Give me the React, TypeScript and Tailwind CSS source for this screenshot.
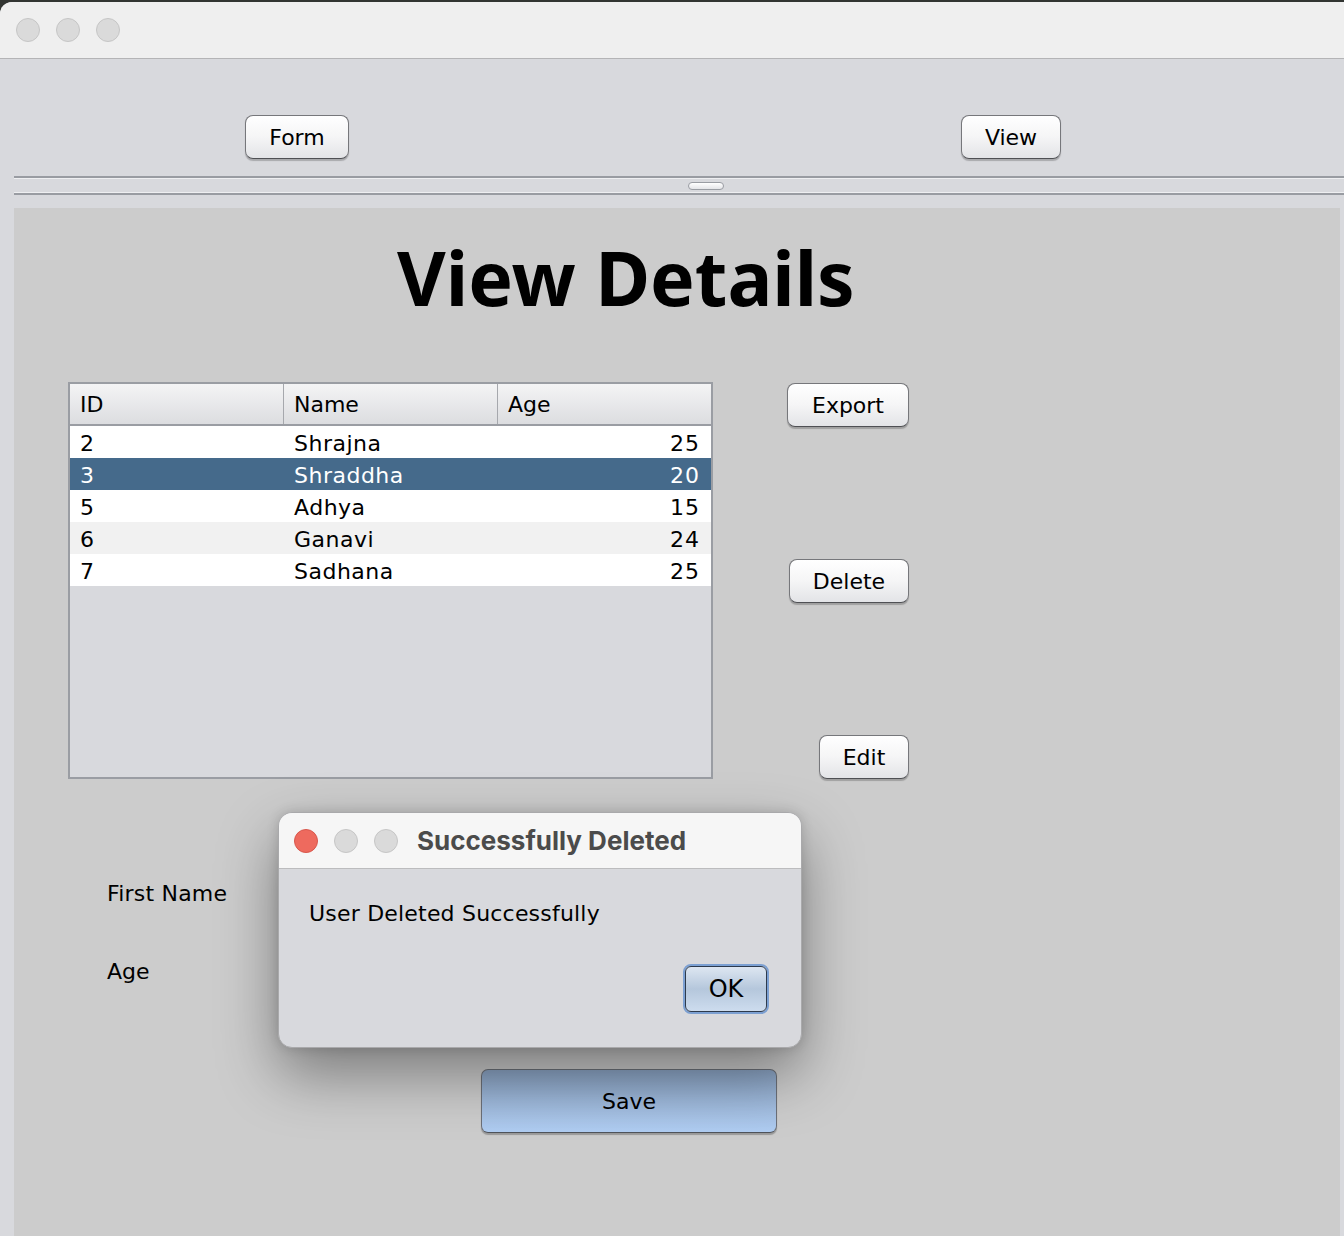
import clsx from "clsx"

type Row = {
  id: string
  name: string
  age: string
}

const rows: Row[] = [
  { id: "2", name: "Shrajna", age: "25" },
  { id: "3", name: "Shraddha", age: "20" },
  { id: "5", name: "Adhya", age: "15" },
  { id: "6", name: "Ganavi", age: "24" },
  { id: "7", name: "Sadhana", age: "25" },
]

const AquaButton = ({ label, className }: { label: string; className?: string }) => (
  <button
    className={clsx(
      "h-[44px] rounded-[8px] border-[1.5px] border-[#76777b] border-b-[#4f5054] bg-linear-to-b from-[#ffffff] via-[#f5f5f6] to-[#e3e4e7] pt-[2px] text-[22px] leading-none text-black shadow-[0_1.5px_1px_rgba(0,0,0,0.22)]",
      className
    )}
  >
    {label}
  </button>
)

const Light = ({ color }: { color: "red" | "gray" }) => (
  <div
    className={clsx(
      "h-[24px] w-[24px] rounded-full border",
      color === "red" ? "border-[#d8574c] bg-[#ee6a5e]" : "border-[#c6c6c6] bg-[#dadada]"
    )}
  />
)

const App = () => {
  return (
    <div className="relative h-[1236px] w-[1344px] overflow-hidden bg-[#323532] font-['DejaVu_Sans',sans-serif] text-black">
      <div className="mt-[2px] flex h-[1234px] flex-col overflow-hidden rounded-tl-[12px] bg-[#d8d9dd]">
        {/* title bar */}
        <div className="flex h-[57px] shrink-0 items-center gap-[16px] border-b border-[#b4b4b6] bg-[#efefef] pl-[16px] pb-[1px]">
          <Light color="gray" />
          <Light color="gray" />
          <Light color="gray" />
        </div>

        {/* top panel */}
        <div className="flex h-[117px] shrink-0 pt-[56px]">
          <AquaButton label="Form" className="ml-[245px] w-[104px]" />
          <AquaButton label="View" className="ml-[612px] w-[100px]" />
        </div>

        {/* split divider */}
        <div className="ml-[14px] shrink-0">
          <div className="h-[2px] bg-[#999ca2]" />
          <div className="h-[1px] bg-[#eeeff1]" />
          <div className="flex h-[13px] items-center">
            <div className="ml-[674px] h-[8px] w-[36px] rounded-full border border-[#9a9da3] bg-linear-to-b from-[#ffffff] to-[#e4e5e8]" />
          </div>
          <div className="h-[1px] bg-[#eeeff1]" />
          <div className="h-[2px] bg-[#999ca2]" />
        </div>

        {/* lower panel */}
        <div className="ml-[14px] mt-[13px] w-[1326px] flex-1 bg-[#cccccc] pl-[54px]">
          <h1 className="ml-[329px] pt-[31px] font-['Noto_Sans',sans-serif] text-[75px] font-bold leading-[76px]">
            View Details
          </h1>

          <div className="mt-[67px] flex items-start">
            <div className="flex h-[397px] w-[645px] flex-col border-2 border-[#9a9da3] bg-[#d8d9dd]">
              <div className="grid h-[42px] shrink-0 grid-cols-[214px_214px_1fr] border-b-2 border-[#9a9da3] bg-linear-to-b from-[#f4f4f5] to-[#dcdde0] text-[22px]">
                <div className="flex items-center border-r border-[#a6a8ad] pl-[10px] pt-[1px]">ID</div>
                <div className="flex items-center border-r border-[#a6a8ad] pl-[10px] pt-[1px]">Name</div>
                <div className="flex items-center pl-[10px] pt-[1px]">Age</div>
              </div>
              {rows.map((row, i) => (
                <div
                  key={row.id}
                  className={clsx(
                    "grid h-[32px] grid-cols-[214px_214px_1fr] items-center text-[22px]",
                    i === 1 ? "bg-[#456a8b] text-white" : i % 2 === 0 ? "bg-white" : "bg-[#f1f1f1]"
                  )}
                >
                  <div className="pl-[10px] pt-[1px]">{row.id}</div>
                  <div className="pl-[10px] pt-[1px] tracking-[0.5px]">{row.name}</div>
                  <div className="pr-[11px] pt-[1px] text-right tracking-[1px]">{row.age}</div>
                </div>
              ))}
            </div>

            <div className="ml-[74px] mt-[1px] flex w-[122px] flex-col items-end gap-[132px]">
              <AquaButton label="Export" className="w-[122px]" />
              <AquaButton label="Delete" className="w-[120px]" />
              <AquaButton label="Edit" className="w-[90px]" />
            </div>
          </div>

          <div className="ml-[39px] mt-[98px] text-[22px] leading-[33px] tracking-[0.2px]">First Name</div>
          <div className="ml-[39px] mt-[45px] text-[22px] leading-[33px]">Age</div>

          <button className="ml-[413px] mt-[81px] h-[64px] w-[296px] rounded-[7px] border-[1.5px] border-[#6c7078] border-b-[#4f535a] bg-linear-to-b from-[#8ba4c4] to-[#b0cdf2] text-[22px] text-black shadow-[0_1.5px_1px_rgba(0,0,0,0.25)]">
            Save
          </button>
        </div>
      </div>

      {/* message dialog */}
      <div className="absolute left-[278px] top-[812px] flex h-[236px] w-[524px] flex-col overflow-hidden rounded-[14px] border border-[#a9a9ab] bg-[#d8d9dd] shadow-[0_26px_60px_rgba(0,0,0,0.4),0_0_12px_rgba(0,0,0,0.15)]">
        <div className="flex h-[56px] shrink-0 items-center border-b border-[#bcbcbe] bg-[#f6f6f6] pl-[15px]">
          <div className="flex gap-[16px]">
            <Light color="red" />
            <Light color="gray" />
            <Light color="gray" />
          </div>
          <div className="ml-[19px] font-['Inter',sans-serif] text-[26px] font-bold text-[#4b4b4b]">
            Successfully Deleted
          </div>
        </div>
        <div className="ml-[30px] mt-[28px] text-[22px] leading-[33px] tracking-[0.2px]">User Deleted Successfully</div>
        <div className="mt-[34px] flex justify-end pr-[32px]">
          <div className="rounded-[8px] border-2 border-[#7ca0d2]">
            <button className="h-[46px] w-[82px] rounded-[6px] border-[1.5px] border-[#2d3a4c] bg-linear-to-b from-[#dde6f1] via-[#b5c7dc] to-[#cddcee] text-[24px] text-black">
              OK
            </button>
          </div>
        </div>
      </div>
    </div>
  )
}

export default App
